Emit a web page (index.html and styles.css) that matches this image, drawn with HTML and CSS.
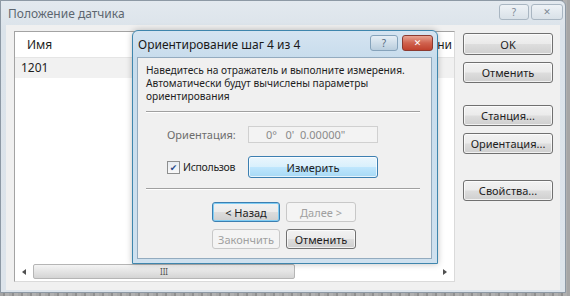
FILE: index.html
```html
<!DOCTYPE html>
<html>
<head>
  <title>Положение датчика</title>
  <link rel="stylesheet" href="styles.css">
</head>
<body>
  <div class="window">
    <div class="titlebar">
      <span class="title">Положение датчика</span>
      <div class="caption-buttons">
        <span class="cap-btn">?</span>
        <span class="cap-btn cap-close">&#x2715;</span>
      </div>
    </div>

    <div class="client">
      <div class="listview">
        <div class="lv-header">
          <span class="lv-col lv-name">Имя</span>
          <span class="lv-col lv-time">Измерени</span>
        </div>
        <div class="lv-row selected">1201</div>
        <div class="lv-fill"></div>
        <div class="hscroll">
          <span class="arrow arrow-left"></span>
          <div class="track">
            <div class="thumb"><span class="grip">III</span></div>
          </div>
          <span class="arrow arrow-right"></span>
        </div>
      </div>

      <div class="side-buttons">
        <button class="btn btn-ok">OK</button>
        <button class="btn">Отменить</button>
        <button class="btn btn-gap">Станция...</button>
        <button class="btn">Ориентация...</button>
        <button class="btn btn-gap2">Свойства...</button>
      </div>
    </div>

    <!-- wizard window on top -->
    <div class="wizard">
      <div class="wz-titlebar">
        <span class="wz-title">Ориентирование шаг 4 из 4</span>
        <div class="wz-caption">
          <span class="wz-cap">?</span>
          <span class="wz-cap wz-close">&#x2715;</span>
        </div>
      </div>
      <div class="wz-body">
        <p class="wz-text">Наведитесь на отражатель и выполните измерения.<br>Автоматически будут вычислены параметры<br>ориентирования</p>
        <div class="sep"></div>
        <div class="wz-row">
          <span class="wz-label">Ориентация:</span>
          <span class="field">0°&nbsp;&nbsp;&nbsp;0'&nbsp;&nbsp;0.00000"</span>
        </div>
        <div class="wz-row wz-row-check">
          <label class="check"><span class="box">&#x2714;</span><span class="check-text">Использов</span></label>
          <button class="btn btn-measure">Измерить</button>
        </div>
        <div class="sep sep2"></div>
        <div class="wz-buttons">
          <button class="btn btn-focus">&lt; Назад</button>
          <button class="btn" disabled>Далее &gt;</button>
          <button class="btn" disabled>Закончить</button>
          <button class="btn">Отменить</button>
        </div>
      </div>
    </div>
  </div>
</body>
</html>
```

FILE: styles.css
```css
body {
  margin: 0;
  width: 570px;
  height: 296px;
  overflow: hidden;
  font-family: "Noto Sans", "DejaVu Sans", sans-serif;
  font-size: 11px;
  color: #1e1e1e;
  background-color: #9e9e9e;
  background-image: repeating-linear-gradient(90deg, #a6a6a6 0 3px, #8f8f8f 3px 5px, #b0b0b0 5px 9px);
}

.window {
  position: relative;
  width: 564px;
  height: 291px;
  border: 1px solid #8d99a5;
  border-top-right-radius: 6px;
  background: linear-gradient(#e3e9ef, #dbe3ea 30px, #dde4eb);
}

.titlebar {
  height: 24px;
  display: flex;
  align-items: center;
  justify-content: space-between;
  padding: 0 2px 0 7px;
}

.title {
  font-size: 12px;
  color: #5d6670;
  margin-top: 1px;
}

.caption-buttons {
  display: flex;
  gap: 2px;
  align-self: flex-start;
  margin-top: 3px;
}

.cap-btn {
  width: 28px;
  height: 14px;
  border: 1px solid #a9b6c2;
  border-radius: 3px;
  background: linear-gradient(#eef2f6, #d9e1e8);
  color: #7d8894;
  font-size: 10px;
  line-height: 14px;
  text-align: center;
}

.cap-close {
  width: 30px;
  font-size: 9px;
}

.client {
  height: 265px;
  margin: 0 5px;
  background-color: #f0f0f0;
  display: flex;
  padding: 6px 0 0 8px;
  box-sizing: border-box;
}

.listview {
  width: 441px;
  height: 251px;
  border: 1px solid #9a9a9a;
  border-color: #a3a3a3 #dadada #dadada #a3a3a3;
  background-color: #fff;
  display: flex;
  flex-direction: column;
  box-sizing: border-box;
  overflow: hidden;
}

.lv-header {
  height: 25px;
  display: flex;
  align-items: center;
  border-bottom: 1px solid #e5e5e5;
  font-size: 12px;
}

.lv-name {
  padding-left: 12px;
  width: 300px;
}

.lv-time {
  flex: 1;
  text-align: right;
  padding-right: 2px;
  white-space: nowrap;
}

.lv-row {
  height: 20px;
  line-height: 20px;
  padding-left: 6px;
  font-size: 12px;
}

.lv-row.selected {
  background-color: #f1f1f1;
}

.lv-fill {
  flex: 1;
}

.hscroll {
  height: 15px;
  margin-bottom: 2px;
  display: flex;
  align-items: center;
}

.arrow {
  width: 0;
  height: 0;
  border-top: 3px solid transparent;
  border-bottom: 3px solid transparent;
  margin: 0 7px;
}

.arrow-left {
  border-right: 4px solid #505050;
}

.arrow-right {
  border-left: 4px solid #505050;
}

.track {
  flex: 1;
  height: 100%;
}

.thumb {
  width: 260px;
  height: 13px;
  border: 1px solid #b5b5b5;
  border-radius: 2px;
  background: linear-gradient(#f4f4f4, #e2e2e2 55%, #d4d4d4);
  text-align: center;
  font-size: 8px;
  line-height: 13px;
  color: #555;
}

.side-buttons {
  display: flex;
  flex-direction: column;
  gap: 7px;
  margin-left: 8px;
  padding-top: 2px;
}

.btn {
  width: 90px;
  height: 21px;
  padding: 0;
  font-family: inherit;
  font-size: 11px;
  color: #1e1e1e;
  border: 1px solid #707070;
  border-radius: 3px;
  background: linear-gradient(#f2f2f2, #ebebeb 48%, #dddddd 52%, #cfcfcf);
  box-shadow: inset 0 0 0 1px rgba(255, 255, 255, 0.7);
}

.btn-ok {
  height: 22px;
}

.btn-gap {
  margin-top: 15px;
}

.btn-gap2 {
  margin-top: 19px;
}

.btn:disabled {
  color: #a0a0a0;
  border-color: #c8c8c8;
  background: #f4f4f4;
  box-shadow: none;
}

/* wizard */

.wizard {
  position: absolute;
  left: 131px;
  top: 29px;
  width: 306px;
  height: 234px;
  box-sizing: border-box;
  border: 1px solid #3f86ad;
  border-radius: 6px 6px 0 0;
  background: linear-gradient(#d5e4f1, #c7dcec 28px, #cfe1ef);
  display: flex;
  flex-direction: column;
  box-shadow: 0 0 6px rgba(0, 0, 0, 0.25);
}

.wz-titlebar {
  height: 26px;
  display: flex;
  align-items: center;
  justify-content: space-between;
  padding: 0 4px 0 5px;
}

.wz-title {
  font-size: 12px;
  color: #1a1a1a;
}

.wz-caption {
  display: flex;
  gap: 4px;
  align-self: flex-start;
  margin-top: 4px;
}

.wz-cap {
  width: 26px;
  height: 14px;
  border: 1px solid #86a3bb;
  border-radius: 3px;
  background: linear-gradient(#e6eef5, #b9cddd);
  color: #546a80;
  font-size: 10px;
  line-height: 14px;
  text-align: center;
}

.wz-close {
  width: 29px;
  border-color: #8b3a30;
  background: linear-gradient(#e8a493, #d0624e 50%, #c0412d);
  color: #fff;
  font-size: 9px;
  font-weight: bold;
}

.wz-body {
  flex: 1;
  margin: 0 5px 4px 4px;
  border: 1px solid #93abbf;
  background-color: #f0f0f0;
  padding: 6px 11px 0 8px;
}

.wz-text {
  margin: 0;
  font-size: 10.2px;
  line-height: 13px;
  color: #1e1e1e;
}

.sep {
  height: 0;
  border-top: 1px solid #a0a0a0;
  border-bottom: 1px solid #fff;
  margin-top: 8px;
}

.sep2 {
  margin-top: 10px;
}

.wz-row {
  display: flex;
  align-items: center;
  margin-top: 13px;
  padding-left: 21px;
}

.wz-label {
  width: 81px;
  color: #6d6d6d;
}

.field {
  width: 130px;
  height: 17px;
  box-sizing: border-box;
  border: 1px solid #d0d0d0;
  background-color: #f3f3f3;
  color: #8a8a8a;
  line-height: 15px;
  padding-left: 17px;
}

.wz-row-check {
  margin-top: 13px;
}

.check {
  width: 81px;
  display: flex;
  align-items: center;
}

.box {
  width: 11px;
  height: 11px;
  border: 1px solid #8e8f8f;
  background: linear-gradient(#e8ecf1, #f8f8f8);
  color: #2a4b8c;
  font-size: 9px;
  line-height: 11px;
  text-align: center;
}

.check-text {
  margin-left: 3px;
  font-size: 10.5px;
  letter-spacing: -0.3px;
  white-space: nowrap;
}

.btn-measure {
  width: 130px;
  height: 22px;
  border-color: #3c7fb1;
  background: linear-gradient(#eaf6fd, #d9f0fc 48%, #bee6fd 52%, #a7d9f5);
}

.wz-buttons {
  display: grid;
  grid-template-columns: 68px 70px;
  gap: 7px 6px;
  margin: 12px 0 0 66px;
}

.wz-buttons .btn {
  width: auto;
  height: 20px;
}

.btn-focus {
  border-color: #3c7fb1;
  box-shadow: inset 0 0 0 1px #80cdf4;
}
```
